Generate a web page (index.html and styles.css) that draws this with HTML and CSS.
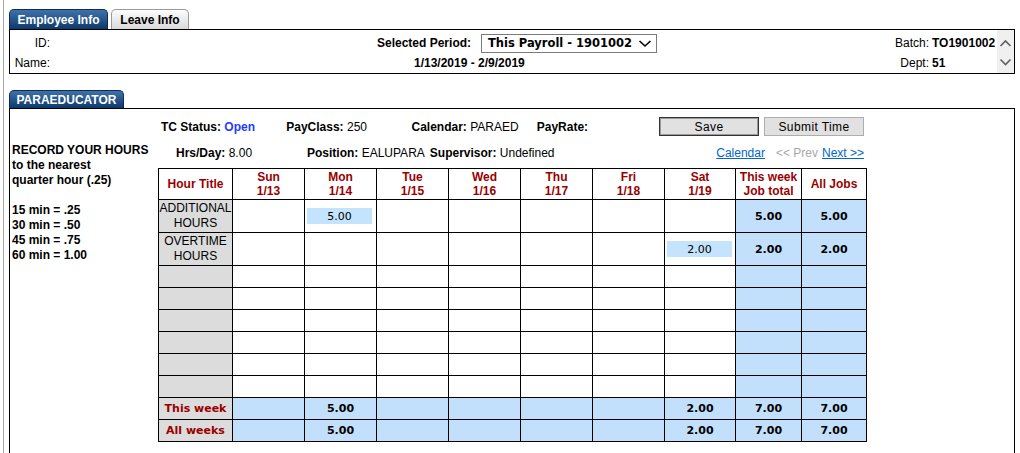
FILE: index.html
```html
<!DOCTYPE html>
<html lang="en">
<head>
    <meta charset="UTF-8">
    <title>Timecard</title>
    <link rel="stylesheet" href="styles.css">
</head>
<body>
<div class="page">
    <div class="tabs">
        <span class="tab tab-active tab-emp">Employee Info</span>
        <span class="tab tab-plain tab-leave">Leave Info</span>
    </div>
    <div class="emp-box">
        <div class="emp-grid">
            <span class="lbl">ID:</span>
            <span></span>
            <span class="lbl period-lbl">Selected Period:</span>
            <div class="period-cell">
                <div class="select">
                    <span>This Payroll - 1901002</span>
                    <svg width="14" height="9" viewBox="0 0 14 9"><polyline points="1.5,2 7,7 12.5,2" fill="none" stroke="#000" stroke-width="1.6"/></svg>
                </div>
            </div>
            <span></span>
            <span class="lbl">Batch:</span>
            <span class="val">TO1901002</span>

            <span class="lbl">Name:</span>
            <span></span>
            <span class="date-range">1/13/2019 - 2/9/2019</span>
            <span></span>
            <span class="lbl">Dept:</span>
            <span class="val">51</span>
        </div>
        <div class="scrollbar">
            <svg width="17" height="43" viewBox="0 0 17 43">
                <polyline points="3.5,16 8.5,11 13.5,16" fill="none" stroke="#606060" stroke-width="1.6"/>
                <polyline points="3.5,29.5 8.5,34.5 13.5,29.5" fill="none" stroke="#606060" stroke-width="1.6"/>
            </svg>
        </div>
    </div>

    <div class="tabs section-tabs">
        <span class="tab tab-active tab-section">PARAEDUCATOR</span>
    </div>
    <div class="main-box">
        <div class="legend">
            <p>RECORD YOUR HOURS<br>to the nearest<br>quarter hour (.25)</p>
            <p>15 min = .25<br>30 min = .50<br>45 min = .75<br>60 min = 1.00</p>
        </div>
        <div class="timecard">
            <div class="info-row">
                <span class="info"><b>TC Status:</b> <b class="open">Open</b></span>
                <span class="info"><b>PayClass:</b> 250</span>
                <span class="info"><b>Calendar:</b> PARAED</span>
                <span class="info"><b>PayRate:</b></span>
                <div class="buttons">
                    <button class="btn btn-default">Save</button>
                    <button class="btn">Submit Time</button>
                </div>
            </div>
            <div class="info-row info-row2">
                <span class="hrs"><b>Hrs/Day:</b> 8.00</span>
                <span class="pos"><b>Position:</b> EALUPARA</span>
                <span><b>Supervisor:</b> Undefined</span>
                <div class="links">
                    <a href="#" class="link cal-link">Calendar</a>
                    <span class="prev">&lt;&lt; Prev</span>
                    <a href="#" class="link">Next &gt;&gt;</a>
                </div>
            </div>
            <table class="hours">
                <colgroup>
                    <col style="width:74px"><col style="width:72px"><col style="width:72px"><col style="width:72px">
                    <col style="width:72px"><col style="width:72px"><col style="width:72px"><col style="width:71px">
                    <col style="width:66px"><col style="width:65px">
                </colgroup>
                <thead>
                    <tr class="head-row">
                        <th>Hour Title</th>
                        <th>Sun<br>1/13</th>
                        <th>Mon<br>1/14</th>
                        <th>Tue<br>1/15</th>
                        <th>Wed<br>1/16</th>
                        <th>Thu<br>1/17</th>
                        <th>Fri<br>1/18</th>
                        <th>Sat<br>1/19</th>
                        <th>This week<br>Job total</th>
                        <th>All Jobs</th>
                    </tr>
                </thead>
                <tbody>
                    <tr class="hour-row">
                        <td class="title">ADDITIONAL<br>HOURS</td>
                        <td></td>
                        <td class="entry"><input class="hour-input" type="text" value="5.00"></td>
                        <td></td><td></td><td></td><td></td><td></td>
                        <td class="sum">5.00</td>
                        <td class="sum">5.00</td>
                    </tr>
                    <tr class="hour-row">
                        <td class="title">OVERTIME<br>HOURS</td>
                        <td></td><td></td><td></td><td></td><td></td><td></td>
                        <td class="entry"><input class="hour-input" type="text" value="2.00"></td>
                        <td class="sum">2.00</td>
                        <td class="sum">2.00</td>
                    </tr>
                    <tr class="empty-row"><td class="title"></td><td></td><td></td><td></td><td></td><td></td><td></td><td></td><td class="sum"></td><td class="sum"></td></tr>
                    <tr class="empty-row"><td class="title"></td><td></td><td></td><td></td><td></td><td></td><td></td><td></td><td class="sum"></td><td class="sum"></td></tr>
                    <tr class="empty-row"><td class="title"></td><td></td><td></td><td></td><td></td><td></td><td></td><td></td><td class="sum"></td><td class="sum"></td></tr>
                    <tr class="empty-row"><td class="title"></td><td></td><td></td><td></td><td></td><td></td><td></td><td></td><td class="sum"></td><td class="sum"></td></tr>
                    <tr class="empty-row"><td class="title"></td><td></td><td></td><td></td><td></td><td></td><td></td><td></td><td class="sum"></td><td class="sum"></td></tr>
                    <tr class="empty-row"><td class="title"></td><td></td><td></td><td></td><td></td><td></td><td></td><td></td><td class="sum"></td><td class="sum"></td></tr>
                </tbody>
                <tfoot>
                    <tr class="foot-row">
                        <td class="foot-title">This week</td>
                        <td class="sum"></td>
                        <td class="sum day-sum">5.00</td>
                        <td class="sum"></td><td class="sum"></td><td class="sum"></td><td class="sum"></td>
                        <td class="sum day-sum">2.00</td>
                        <td class="sum">7.00</td>
                        <td class="sum">7.00</td>
                    </tr>
                    <tr class="foot-row">
                        <td class="foot-title">All weeks</td>
                        <td class="sum"></td>
                        <td class="sum day-sum">5.00</td>
                        <td class="sum"></td><td class="sum"></td><td class="sum"></td><td class="sum"></td>
                        <td class="sum day-sum">2.00</td>
                        <td class="sum">7.00</td>
                        <td class="sum">7.00</td>
                    </tr>
                </tfoot>
            </table>
        </div>
    </div>
</div>
</body>
</html>
```

FILE: styles.css
```css
body {
    margin: 0;
    font-family: "Liberation Sans", Arial, sans-serif;
    font-size: 12px;
    color: #000;
    background: #fff;
}
.page {
    margin-left: 3px;
    border-left: 1px solid #a8a8a8;
    padding: 9px 5px 0 5px;
    min-height: calc(100vh - 9px);
}
.tabs {
    display: flex;
    gap: 3px;
    height: 20px;
}
.tab {
    display: flex;
    align-items: center;
    justify-content: center;
    box-sizing: border-box;
    font-weight: bold;
    border-radius: 5px 5px 0 0;
}
.tab-active {
    background: linear-gradient(#3f72aa, #0d396b);
    color: #fff;
    border: 1px solid #0b2d57;
    border-bottom: none;
}
.tab-plain {
    background: linear-gradient(#fdfdfd, #d9d9d9);
    border: 1px solid #9a9a9a;
    border-bottom: none;
}
.tab-emp {
    width: 99px;
}
.tab-leave {
    width: 78px;
}
.section-tabs {
    margin-top: 16px;
    height: 18px;
}
.tab-section {
    width: 115px;
}
.emp-box {
    display: flex;
    border: 1px solid #000;
    height: 45px;
    box-sizing: border-box;
}
.emp-grid {
    flex: 1;
    display: grid;
    grid-template-columns: 40px 327px 93px 187px 1fr 60px 68px;
    grid-template-rows: 20px 20px;
    padding-top: 3px;
    align-items: center;
    white-space: nowrap;
}
.lbl {
    text-align: right;
}
.period-lbl {
    font-weight: bold;
}
.val {
    padding-left: 3px;
    font-weight: bold;
}
.period-cell {
    padding-left: 11px;
}
.select {
    width: 176px;
    height: 19px;
    box-sizing: border-box;
    border: 1px solid #7a7a7a;
    display: flex;
    align-items: center;
    justify-content: space-between;
    padding: 0 4px 0 6px;
    font-family: "DejaVu Sans", Verdana, sans-serif;
    font-weight: bold;
    font-size: 11.5px;
}
.date-range {
    grid-column: 3 / span 2;
    padding-left: 37px;
    font-weight: bold;
}
.scrollbar {
    width: 17px;
    background: #f0f0f0;
}
.main-box {
    display: flex;
    border: 1px solid #000;
    padding-bottom: 30px;
}
.legend {
    width: 146px;
    padding: 34px 0 0 2px;
    font-weight: bold;
    line-height: 15px;
}
.legend p {
    margin: 0 0 15px;
}
.timecard {
    padding-top: 8px;
    width: 709px;
}
.info-row {
    display: flex;
    align-items: center;
    height: 19px;
    white-space: nowrap;
}
.info {
    width: 127px;
    padding-left: 3px;
    box-sizing: border-box;
}
.open {
    color: #1f3cff;
}
.buttons {
    margin-left: auto;
    display: flex;
    gap: 5px;
    padding-right: 3px;
}
.btn {
    width: 100px;
    height: 19px;
    padding: 0;
    border: 1px solid #adadad;
    background: #e1e1e1;
    font-family: "Liberation Sans", Arial, sans-serif;
    font-size: 12px;
    letter-spacing: 0.4px;
    color: #000;
}
.btn-default {
    border-color: #333;
    box-shadow: inset 0 0 0 1px #9a9a9a;
}
.info-row2 {
    margin-top: 8px;
    height: 18px;
}
.hrs {
    margin-left: 18px;
    width: 131px;
}
.pos {
    margin-right: 5px;
}
.links {
    margin-left: auto;
    padding-right: 3px;
    display: flex;
}
.link {
    color: #0066cc;
    text-decoration: underline;
}
.cal-link {
    margin-right: 11px;
}
.prev {
    color: #a8a8a8;
    margin-right: 4px;
}
.hours {
    border-collapse: collapse;
    table-layout: fixed;
    width: 709px;
    margin-top: 6px;
}
.hours th,
.hours td {
    border: 1px solid #000;
    padding: 0;
    text-align: center;
}
.hours th {
    color: #900;
    font-weight: bold;
    line-height: 14px;
}
.head-row {
    height: 31px;
}
.hour-row {
    height: 33px;
}
.empty-row,
.foot-row {
    height: 22px;
}
.title {
    background: #dcdcdc;
    line-height: 15px;
}
.sum {
    background: #c2e0fb;
    font-family: "DejaVu Sans", Verdana, sans-serif;
    font-weight: bold;
    font-size: 11px;
}
.foot-title {
    background: #dcdcdc;
    color: #900;
    font-family: "DejaVu Sans", Verdana, sans-serif;
    font-weight: bold;
    font-size: 11px;
}
.hours td.entry {
    text-align: left;
    padding: 0 1px;
}
.hour-input {
    display: block;
    width: 65px;
    height: 16px;
    margin: 0 0 0 1px;
    padding: 0;
    border: 0;
    background: #c4e3fc;
    font-family: "DejaVu Sans", Verdana, sans-serif;
    font-size: 11px;
    text-align: center;
    color: #000;
}
```
